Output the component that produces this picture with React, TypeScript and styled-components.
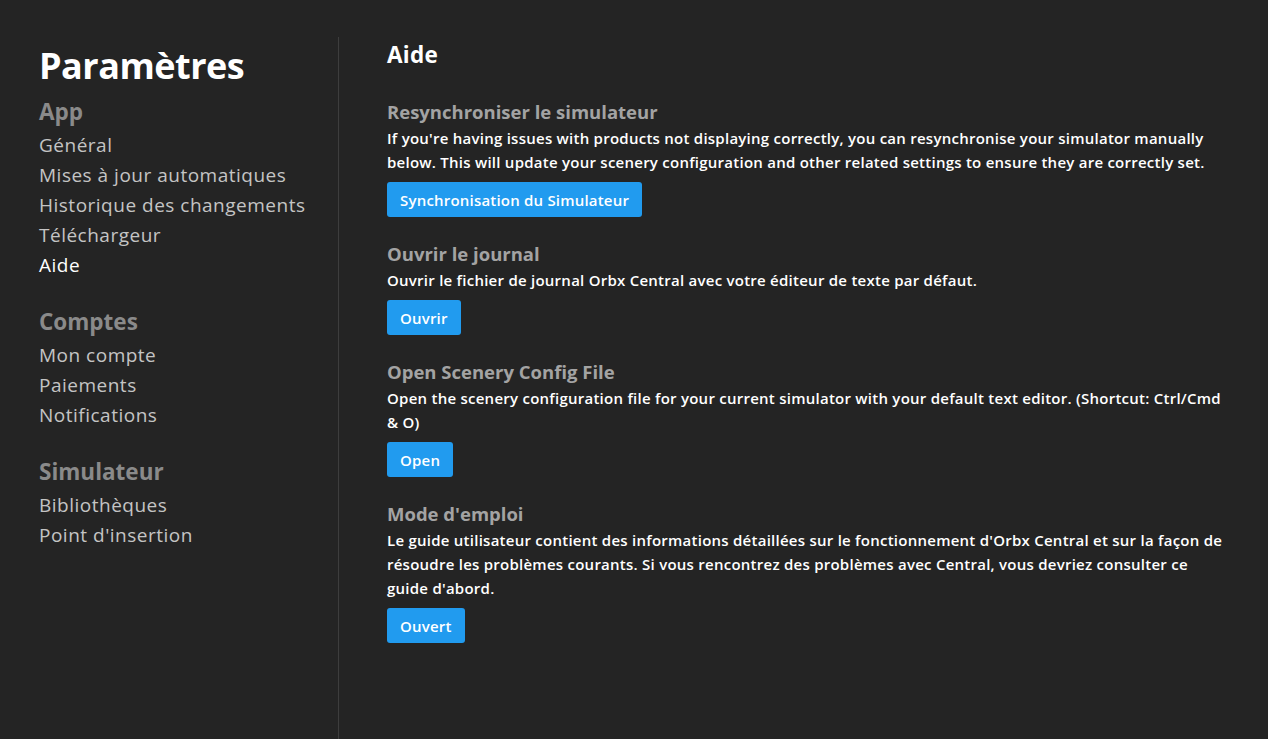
import styled, { createGlobalStyle } from 'styled-components'

const GlobalStyle = createGlobalStyle`
    html, body {
        margin: 0;
        padding: 0;
        background: #242424;
        font-family: "Open Sans", "Noto Sans", sans-serif;
    }
`

const navGroups = [
    { title: 'App', items: ['Général', 'Mises à jour automatiques', 'Historique des changements', 'Téléchargeur', 'Aide'] },
    { title: 'Comptes', items: ['Mon compte', 'Paiements', 'Notifications'] },
    { title: 'Simulateur', items: ['Bibliothèques', "Point d'insertion"] },
]

const sections = [
    {
        title: 'Resynchroniser le simulateur',
        text: "If you're having issues with products not displaying correctly, you can resynchronise your simulator manually below. This will update your scenery configuration and other related settings to ensure they are correctly set.",
        button: 'Synchronisation du Simulateur',
    },
    {
        title: 'Ouvrir le journal',
        text: 'Ouvrir le fichier de journal Orbx Central avec votre éditeur de texte par défaut.',
        button: 'Ouvrir',
    },
    {
        title: 'Open Scenery Config File',
        text: 'Open the scenery configuration file for your current simulator with your default text editor. (Shortcut: Ctrl/Cmd & O)',
        button: 'Open',
    },
    {
        title: "Mode d'emploi",
        text: "Le guide utilisateur contient des informations détaillées sur le fonctionnement d'Orbx Central et sur la façon de résoudre les problèmes courants. Si vous rencontrez des problèmes avec Central, vous devriez consulter ce guide d'abord.",
        button: 'Ouvert',
    },
]

const App = () => {
    return <Page>
        <GlobalStyle />
        <Sidebar>
            <PageTitle>Paramètres</PageTitle>
            {navGroups.map(g => <NavGroup key={g.title}>
                <GroupTitle>{g.title}</GroupTitle>
                {g.items.map(item => <NavItem key={item} $active={item === 'Aide'}>{item}</NavItem>)}
            </NavGroup>)}
        </Sidebar>
        <Content>
            <ContentTitle>Aide</ContentTitle>
            {sections.map(s => <Section key={s.title}>
                <SectionTitle>{s.title}</SectionTitle>
                <SectionText>{s.text}</SectionText>
                <Button>{s.button}</Button>
            </Section>)}
        </Content>
    </Page>
}

export default App

const Page = styled.div`
    display: flex;
    min-height: 739px;
    padding-top: 37px;
    box-sizing: border-box;
    background: #242424;
`

const Sidebar = styled.nav`
    width: 339px;
    box-sizing: border-box;
    padding: 4px 0 0 39px;
    border-right: 1px solid #3d3d3d;
`

const PageTitle = styled.h1`
    margin: 0 0 3px;
    font-size: 36px;
    line-height: 50px;
    font-weight: 700;
    color: #ffffff;
    letter-spacing: -0.5px;
`

const NavGroup = styled.div`
    margin-bottom: 24px;
`

const GroupTitle = styled.div`
    font-size: 22.5px;
    line-height: 36px;
    font-weight: 700;
    color: #8a8a8a;
`

const NavItem = styled.div<{ $active?: boolean }>`
    font-size: 19px;
    line-height: 30px;
    letter-spacing: 0.5px;
    color: ${p => p.$active ? '#ffffff' : '#c4c4c4'};
`

const Content = styled.main`
    flex: 1;
    padding: 3px 40px 0 48px;
`

const ContentTitle = styled.h2`
    margin: 0 0 28px;
    font-size: 22.5px;
    line-height: 30px;
    font-weight: 700;
    color: #ffffff;
    letter-spacing: 0.3px;
`

const Section = styled.section`
    margin-bottom: 23px;
`

const SectionTitle = styled.h3`
    margin: 0;
    font-size: 18.5px;
    line-height: 28px;
    font-weight: 700;
    color: #a3a3a3;
`

const SectionText = styled.p`
    margin: 0 0 8px;
    font-size: 15px;
    line-height: 24px;
    font-weight: 600;
    letter-spacing: 0.25px;
    color: #ffffff;
`

const Button = styled.button`
    display: inline-block;
    height: 35px;
    padding: 0 13px;
    border: none;
    border-radius: 3px;
    background: #219bef;
    color: #ffffff;
    font-family: inherit;
    font-size: 15px;
    font-weight: 600;
    letter-spacing: 0.2px;
    cursor: pointer;
`
